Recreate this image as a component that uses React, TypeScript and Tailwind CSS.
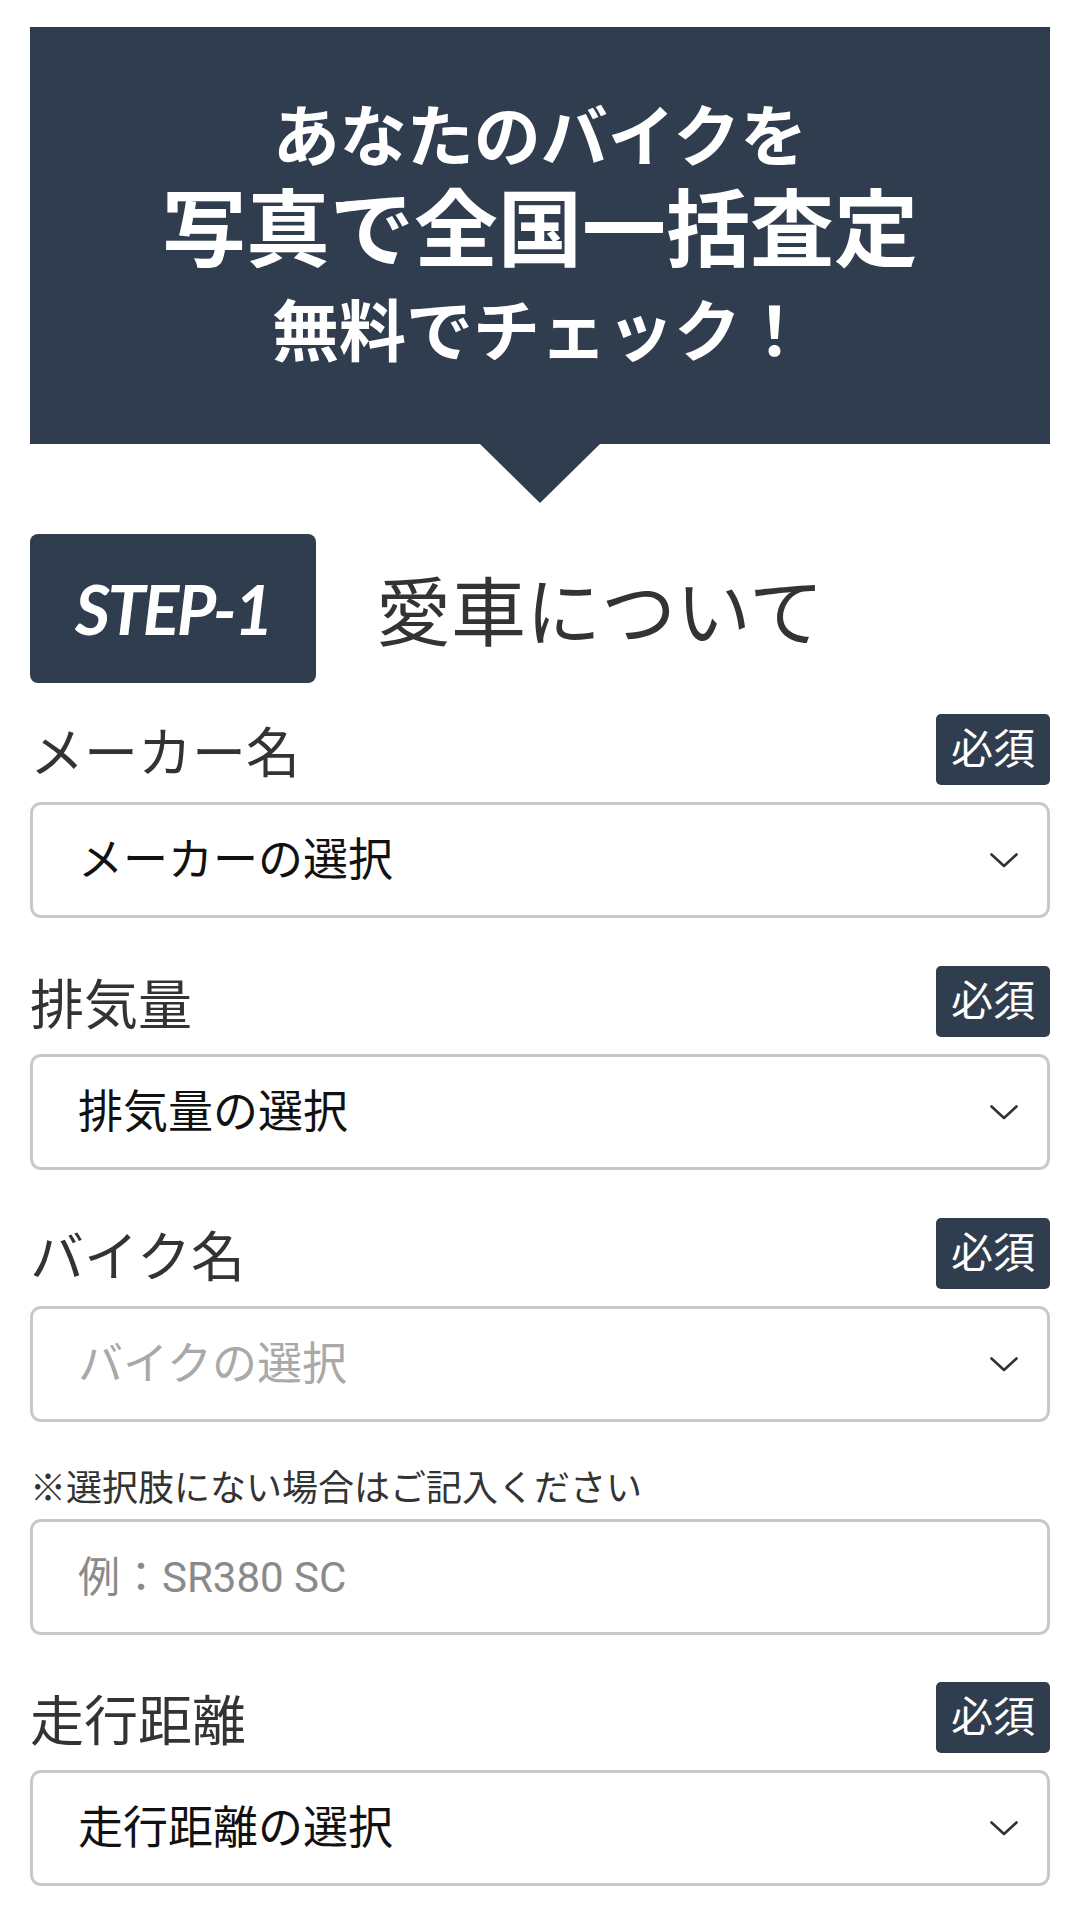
import { ReactNode } from 'react';

const navy = 'bg-[#303d4e]';

function Badge() {
  return (
    <span className={`${navy} flex h-[71px] w-[114px] items-center justify-center rounded-[5px] text-[42px] leading-none text-white`}>
      必須
    </span>
  );
}

function Chevron() {
  return (
    <svg width="28" height="15" viewBox="0 0 28 15" fill="none" className="shrink-0">
      <polyline points="1.5,1.5 14,13 26.5,1.5" stroke="#333" strokeWidth="2.6" strokeLinecap="round" strokeLinejoin="round" />
    </svg>
  );
}

function SelectBox({ children, placeholder }: { children: ReactNode; placeholder?: boolean }) {
  return (
    <div className="mt-[17px] flex h-[116px] items-center justify-between rounded-[11px] border-[3px] border-[#c8c8c8] bg-white pl-[45px] pr-[29px]">
      <span className={`text-[45px] leading-none ${placeholder ? 'text-[#a9a9a9]' : 'text-[#111]'}`}>{children}</span>
      <Chevron />
    </div>
  );
}

function FieldLabel({ label, className = '' }: { label: string; className?: string }) {
  return (
    <div className={`flex h-[71px] items-center justify-between ${className}`}>
      <span className="pt-[10px] text-[54px] leading-none text-[#333]">{label}</span>
      <Badge />
    </div>
  );
}

export default function App() {
  return (
    <div className="min-h-[1916px] bg-white px-[30px] pt-[27px] font-['Roboto','Noto_Sans_CJK_JP',sans-serif]">
      {/* Banner */}
      <div className={`${navy} relative flex h-[417px] flex-col items-center pt-[71px] font-bold text-white`}>
        <p className="text-[67px] leading-[80px]">あなたのバイクを</p>
        <p className="text-[84px] leading-[108px]">写真で全国一括査定</p>
        <p className="text-[67px] leading-[94px]">無料でチェック！</p>
        <span className="absolute left-1/2 top-full h-0 w-0 -translate-x-1/2 border-l-[60px] border-r-[60px] border-t-[59px] border-l-transparent border-r-transparent border-t-[#303d4e]" />
      </div>

      {/* Step heading */}
      <div className="mt-[90px] flex items-center">
        <div className={`${navy} flex h-[149px] w-[286px] items-center justify-center rounded-[8px]`}>
          <span className="font-['Lato',sans-serif] text-[68px] font-bold italic leading-none tracking-[-2.5px] text-white">STEP-1</span>
        </div>
        <h2 className="ml-[60px] pt-[12px] text-[75px] leading-none text-[#333]">愛車について</h2>
      </div>

      {/* Fields */}
      <FieldLabel label="メーカー名" className="mt-[31px]" />
      <SelectBox>メーカーの選択</SelectBox>

      <FieldLabel label="排気量" className="mt-[48px]" />
      <SelectBox>排気量の選択</SelectBox>

      <FieldLabel label="バイク名" className="mt-[48px]" />
      <SelectBox placeholder>バイクの選択</SelectBox>

      <p className="mt-[40px] text-[36px] leading-[54px] text-[#333]">※選択肢にない場合はご記入ください</p>
      <input
        type="text"
        placeholder="例：SR380 SC"
        className="mt-[3px] block h-[116px] w-full rounded-[11px] border-[3px] border-[#c8c8c8] bg-white pl-[45px] text-[42px] text-[#111] outline-none placeholder:text-[#8a8a8a]"
      />

      <FieldLabel label="走行距離" className="mt-[47px]" />
      <SelectBox>走行距離の選択</SelectBox>
    </div>
  );
}
